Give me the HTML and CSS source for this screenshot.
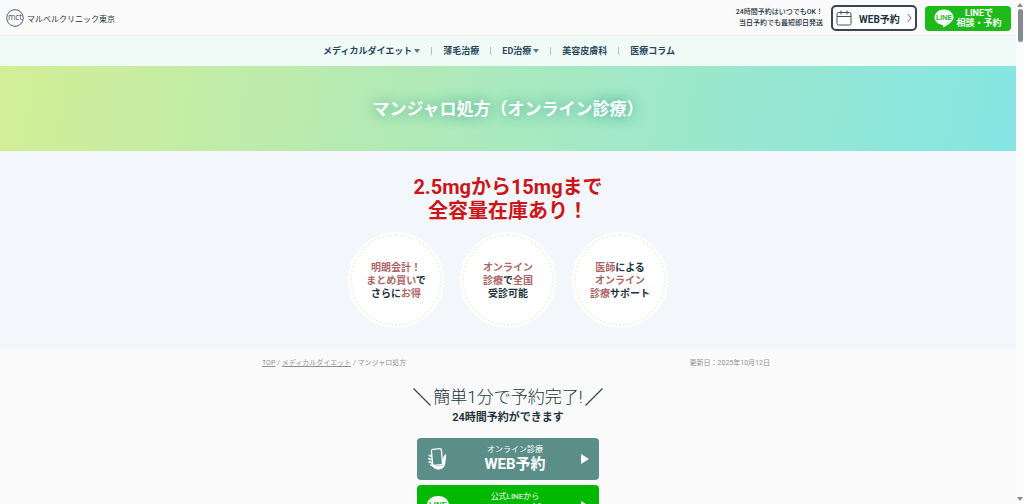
FILE: index.html
```html
<!DOCTYPE html>
<html lang="ja">
<head>
<meta charset="utf-8">
<meta name="viewport" content="width=device-width, initial-scale=1">
<title>マンジャロ処方（オンライン診療）</title>
<link rel="stylesheet" href="styles.css">
</head>
<body>
<div class="window">
  <div class="page">
    <header class="header">
      <a class="brand" href="#">
        <svg class="brand-mark" viewBox="0 0 18 18" aria-hidden="true"><circle cx="9" cy="9" r="8.3" fill="none" stroke="#4f6475" stroke-width="1"/><text x="9" y="11.3" text-anchor="middle" class="mark-text">mct</text></svg>
        <span>マルベルクリニック東京</span>
      </a>
      <div class="header-actions">
        <p class="notice">24時間予約はいつでもOK！<br>当日予約でも最短即日発送</p>
        <a class="web-button" href="#">
          <svg class="calendar" viewBox="0 0 16 16" fill="none" stroke="#46515a" aria-hidden="true"><rect x="1" y="2.500" width="14" height="12.500" rx="1.500"/><path d="M1 6.500h14M5 .5v4M11 .5v4"/></svg>
          <span>WEB予約</span>
          <svg class="chevron" viewBox="0 0 5 10" fill="none" stroke="#59646c" aria-hidden="true"><path d="M.7 1 4.2 5 .7 9"/></svg>
        </a>
        <a class="line-button" href="#">
          <svg class="line-mark" viewBox="0 0 20 19" aria-hidden="true"><path fill="#fff" d="M10 .5C4.800.5.500 3.900.500 8.300c0 3.800 3.300 6.900 8 7.600.8.200.7.700.5 2.600 3.500-1.700 10.500-5.500 10.500-10.200C19.500 3.900 15.200.5 10 .5z"/><text x="10" y="10.500" text-anchor="middle" class="line-text">LINE</text></svg>
          <span>LINEで<br>相談・予約</span>
        </a>
      </div>
    </header>
    <nav class="nav" aria-label="メイン">
      <ul class="nav-list">
        <li><a href="#">メディカルダイエット<i class="caret"></i></a></li>
        <li><a href="#">薄毛治療</a></li>
        <li><a href="#">ED治療<i class="caret"></i></a></li>
        <li><a href="#">美容皮膚科</a></li>
        <li><a href="#">医療コラム</a></li>
      </ul>
    </nav>
    <main>
      <div class="hero"><h1>マンジャロ処方（オンライン診療）</h1></div>
      <section class="lead">
        <h2>2.5mgから15mgまで<br>全容量在庫あり！</h2>
        <ul class="points">
          <li><p><em>明朗会計！</em><br><em>まとめ買い</em>で<br>さらに<em>お得</em></p></li>
          <li><p><em>オンライン</em><br><em>診療</em>で<em>全国</em><br>受診可能</p></li>
          <li><p><em>医師</em>による<br><em>オンライン</em><br><em>診療</em>サポート</p></li>
        </ul>
      </section>
      <div class="meta">
        <nav aria-label="パンくず"><a href="#">TOP</a> / <a href="#">メディカルダイエット</a> / マンジャロ処方</nav>
        <span>更新日：2025年10月12日</span>
      </div>
      <section class="reserve">
        <h2>
          <svg class="slash" viewBox="0 0 18 18" aria-hidden="true"><path d="M.5.5l17 17"/></svg>
          <span>簡単1分で予約完了!</span>
          <svg class="slash" viewBox="0 0 18 18" aria-hidden="true"><path d="M17.500.5l-17 17"/></svg>
        </h2>
        <p class="always">24時間予約ができます</p>
        <a class="cta cta-web" href="#">
          <svg class="cta-icon" viewBox="0 0 22 24" aria-hidden="true"><rect x="5" y="2" width="10" height="16" rx="1.500" transform="rotate(-5 10 10)" fill="none" stroke="#fff" stroke-width="1.300"/><path fill="#fff" d="M16 12c.3-3 2.300-5.500 3.300-4.500L18.200 17c-.6 3-3 5.500-6.700 5.500-4 0-6-2.200-6-4.500l3 1.300 6.500-.8c.8-.1 1-1 1-1.800z"/><path d="M2.500 8.500l1.500.8M2 11.700l2 .8M2.300 15l2.200.6M4 18l1.700.7" stroke="#fff" stroke-width="1.800" stroke-linecap="round"/></svg>
          <span class="cta-label"><small>オンライン診療</small><strong>WEB予約</strong></span>
          <i class="play"></i>
        </a>
        <a class="cta cta-line" href="#">
          <svg class="cta-icon" viewBox="0 0 22 22" aria-hidden="true"><path fill="#fff" d="M11 1C5 1 0 5 0 10c0 4.300 3.800 7.700 9 8.500.9.200.8.800.6 2.800C13.500 19.500 22 15.400 22 10 22 5 17 1 11 1z"/><text x="11" y="12" text-anchor="middle" class="cta-line-text">LINE</text></svg>
          <span class="cta-label"><small>公式LINEから</small><strong>LINE予約</strong></span>
          <i class="play"></i>
        </a>
      </section>
    </main>
  </div>
  <div class="scrollbar" aria-hidden="true"><i class="arrow-up"></i><i class="thumb"></i><i class="arrow-down"></i></div>
</div>
</body>
</html>
```
FILE: styles.css
```css
* { box-sizing: border-box; }
body, h1, h2, p, ul { margin: 0; padding: 0; }
body { font-family: Roboto, "Noto Sans CJK JP", sans-serif; color: #25343e; background: #fafafa; }
ul { list-style: none; }
a { color: inherit; text-decoration: none; }
.window { display: flex; height: 100vh; overflow: hidden; }
.page { flex: 1; min-width: 0; overflow: hidden; }

.header { display: flex; justify-content: space-between; align-items: center; height: 36px; padding: 1px 5px 0 6px; background: #fafafa; border-bottom: 1px solid #eff0f1; }
.brand { display: flex; align-items: center; gap: 3px; font-size: 8px; }
.brand-mark { width: 18px; height: 18px; }
.mark-text { font: 8px "Noto Sans", sans-serif; fill: #4f6475; }
.header-actions { display: flex; align-items: center; gap: 8px; }
.notice { font-size: 7px; line-height: 11px; font-weight: 500; text-align: right; }
.web-button { display: flex; align-items: center; justify-content: space-between; width: 86px; height: 26px; padding: 0 3px; border: 2px solid #39444d; border-radius: 5px; background: #fff; font-size: 10px; font-weight: 700; }
.calendar { width: 16px; height: 16px; }
.chevron { width: 5px; height: 10px; }
.line-button { display: flex; align-items: center; justify-content: center; gap: 2px; width: 86px; height: 25px; border-radius: 4px; background: #1dbb1a; color: #fff; font-size: 9px; line-height: 10px; font-weight: 700; text-align: center; }
.line-mark { width: 20px; height: 19px; }
.line-text { font: 700 7px "Liberation Sans", sans-serif; fill: #1dbb1a; }

.nav { height: 30px; padding-right: 18px; background: #f0faf7; color: #29475d; }
.nav-list { display: flex; justify-content: center; align-items: center; height: 100%; font-size: 9px; font-weight: 700; }
.nav-list li { display: flex; align-items: center; line-height: 12px; }
.nav-list li + li::before { content: ""; width: 1px; height: 8px; margin: 0 11px; background: #b5c0c4; }
.caret { display: inline-block; margin-left: 2px; border: 3px solid transparent; border-top: 4px solid #4d817f; border-bottom: 0; vertical-align: 1px; }

.hero { display: flex; align-items: center; justify-content: center; height: 85px; background: linear-gradient(100deg, #d3ee95, #a9e9bf 50%, #84e5e3); }
.hero h1 { font-size: 17px; line-height: 24px; font-weight: 700; color: #fff; text-shadow: 0 0 14px #2f9a8a; }
.lead { padding: 24px 0 21px; background: #f3f6fa; text-align: center; }
.lead h2 { font-size: 20px; line-height: 24px; font-weight: 700; color: #cc1518; }
.points { display: flex; justify-content: center; gap: 16px; margin-top: 9px; }
.points li { width: 96px; height: 96px; padding: 2px; border-radius: 50%; background: #fff; }
.points p { height: 92px; padding-top: 25px; border: 2px dotted #f0f4e2; border-radius: 50%; font-size: 10px; line-height: 13px; font-weight: 700; }
.points em { font-style: normal; color: #b06565; }

.meta { display: flex; justify-content: space-between; max-width: 524px; margin: 0 auto; padding: 8px 0 0 16px; font-size: 7px; line-height: 12px; color: #8d9296; }
.meta a { text-decoration: underline; text-underline-offset: 1px; }
.reserve { display: flex; flex-direction: column; align-items: center; padding-top: 16px; }
.reserve h2 { display: flex; align-items: center; gap: 2px; font-size: 17px; line-height: 24px; font-weight: 300; }
.slash { width: 18px; height: 18px; stroke: #3a4c58; stroke-width: 1.2; }
.always { font-size: 11px; line-height: 18px; font-weight: 700; }
.cta { display: flex; align-items: center; width: 182px; height: 42px; padding: 0 10px; border-radius: 4px; color: #fff; }
.cta-web { margin-top: 11px; background: #5b8e88; }
.cta-line { margin-top: 5px; background: #00b900; }
.cta-icon { width: 22px; height: 24px; }
.cta-line-text { font: 700 8px "Liberation Sans", sans-serif; fill: #00b900; }
.cta-label { flex: 1; display: flex; flex-direction: column; align-items: center; }
.cta-label small { font-size: 8px; line-height: 10px; }
.cta-label strong { font-size: 15px; line-height: 18px; }
.play { border: 5px solid transparent; border-left: 8px solid #fff; border-right: 0; }

.scrollbar { display: flex; flex-direction: column; align-items: center; width: 8px; padding: 3px 0; background: #fcfcfc; }
.arrow-up { border: 3px solid transparent; border-bottom: 4px solid #858b90; border-top: 0; }
.thumb { width: 5px; height: 33px; margin-top: 2px; border-radius: 3px; background: #858b90; }
.arrow-down { margin-top: auto; border: 3px solid transparent; border-top: 4px solid #858b90; border-bottom: 0; }
```
